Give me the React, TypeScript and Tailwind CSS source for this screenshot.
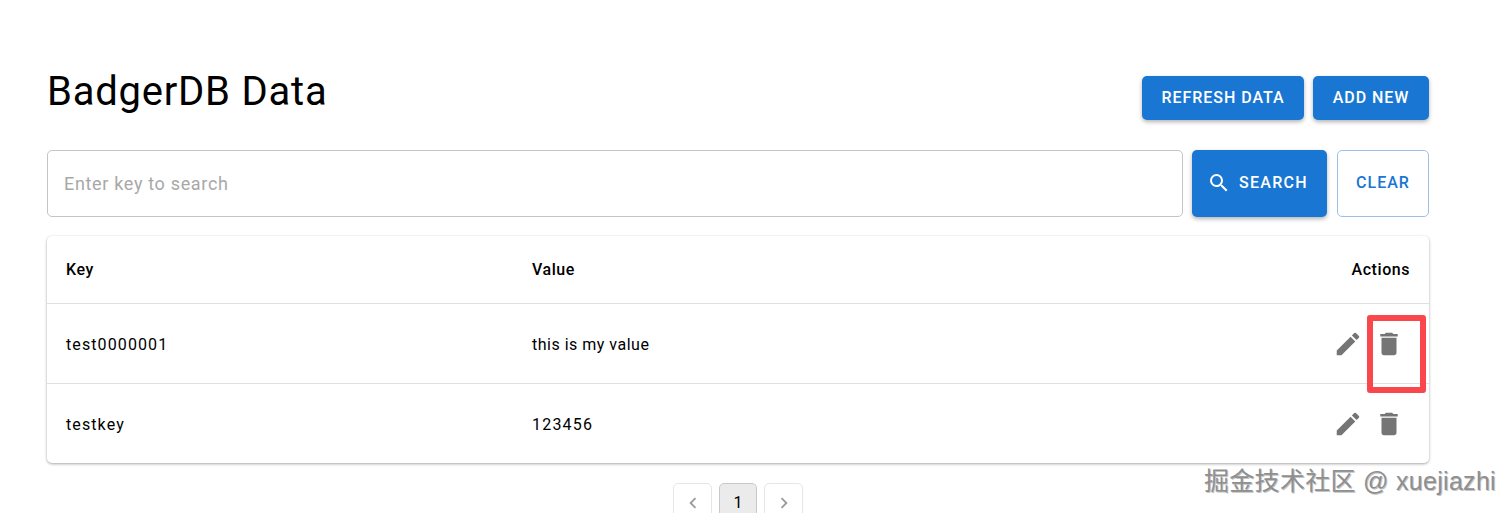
const rows = [
  { key: 'test0000001', value: 'this is my value', valueClass: 'tracking-[0.5px]', height: 'h-[80px] border-b border-[#e0e0e0]' },
  { key: 'testkey', value: '123456', valueClass: 'tracking-[1.2px]', height: 'h-[79px]' },
];

function EditIcon() {
  return (
    <svg viewBox="0 0 24 24" className="w-[30px] h-[30px] fill-[#757575]">
      <path d="M3 17.25V21h3.75L17.81 9.94l-3.75-3.75L3 17.25zM20.71 7.04a.996.996 0 0 0 0-1.41l-2.34-2.34a.996.996 0 0 0-1.41 0l-1.83 1.83 3.75 3.75 1.83-1.83z" />
    </svg>
  );
}

function DeleteIcon() {
  return (
    <svg viewBox="0 0 24 24" className="w-[30px] h-[30px] fill-[#757575]">
      <path d="M6 19c0 1.1.9 2 2 2h8c1.1 0 2-.9 2-2V7H6v12zM19 4h-3.5l-1-1h-5l-1 1H5v2h14V4z" />
    </svg>
  );
}

function SearchIcon() {
  return (
    <svg viewBox="0 0 24 24" className="w-[24px] h-[24px] fill-white">
      <path d="M15.5 14h-.79l-.28-.27A6.471 6.471 0 0 0 16 9.5 6.5 6.5 0 1 0 9.5 16c1.61 0 3.09-.59 4.23-1.57l.27.28v.79l5 4.99L20.49 19l-4.99-5zm-6 0C7.01 14 5 11.99 5 9.5S7.01 5 9.5 5 14 7.01 14 9.5 11.99 14 9.5 14z" />
    </svg>
  );
}

export default function App() {
  return (
    <div className="relative h-[513px] overflow-hidden bg-white font-['Roboto',sans-serif] text-black">
      <div className="pl-[47px] pr-[83px] pt-[76px]">
        <div className="flex items-start justify-between h-[74px]">
          <h1 className="text-[40px] leading-[32px] tracking-[0.77px] font-normal">BadgerDB Data</h1>
          <div className="flex gap-[9px]">
            <button className="h-[44px] w-[162px] rounded-[5px] bg-[#1976d2] text-white text-[16px] font-medium tracking-[0.95px] shadow-[0_2px_4px_rgba(0,0,0,0.3)]">
              REFRESH DATA
            </button>
            <button className="h-[44px] w-[116px] rounded-[5px] bg-[#1976d2] text-white text-[16px] font-medium tracking-[0.95px] shadow-[0_2px_4px_rgba(0,0,0,0.3)]">
              ADD NEW
            </button>
          </div>
        </div>

        <div className="flex gap-[9px] h-[67px]">
          <div className="flex-1 flex items-center border border-[#c4c4c4] rounded-[5px] px-[16px]">
            <span className="text-[18px] text-[#a8a8a8] tracking-[0.67px]">Enter key to search</span>
          </div>
          <button className="w-[135px] mr-px flex items-center justify-center gap-[8px] pb-[2px] pr-[4px] rounded-[5px] bg-[#1976d2] text-white text-[16px] font-medium tracking-[1.3px] shadow-[0_2px_4px_rgba(0,0,0,0.3)]">
            <SearchIcon />
            SEARCH
          </button>
          <button className="w-[92px] pb-[2px] rounded-[5px] border border-[#9dc1e6] text-[#1976d2] text-[16px] font-medium tracking-[1px]">
            CLEAR
          </button>
        </div>

        <div className="mt-[19px] rounded-[5px] shadow-[0_1px_3px_rgba(0,0,0,0.35)]">
          <div className="flex items-center h-[68px] border-b border-[#e0e0e0] px-[19px] text-[16px] font-medium tracking-[0.55px]">
            <div className="w-[466px]">Key</div>
            <div className="flex-1">Value</div>
            <div>Actions</div>
          </div>
          {rows.map((row) => (
            <div key={row.key} className={`flex items-center pl-[19px] pr-[25px] text-[16px] ${row.height}`}>
              <div className="w-[466px] pt-[2px] tracking-[1.1px]">{row.key}</div>
              <div className={`flex-1 pt-[2px] ${row.valueClass}`}>{row.value}</div>
              <div className="flex items-center gap-[11px]">
                <EditIcon />
                <DeleteIcon />
              </div>
            </div>
          ))}
        </div>

        <div className="mt-[20px] flex justify-center gap-[7px]">
          <div className="w-[39px] h-[40px] flex items-center justify-center border border-[#e6e6e6] rounded-[5px]">
            <svg viewBox="0 0 24 24" className="w-[22px] h-[22px] fill-[#9a9a9a]"><path d="M15.41 7.41 14 6l-6 6 6 6 1.41-1.41L10.83 12z" /></svg>
          </div>
          <div className="w-[38px] h-[40px] flex items-center justify-center border border-[#c9c9c9] bg-[#ebebeb] rounded-[5px] text-[16px]">1</div>
          <div className="w-[39px] h-[40px] flex items-center justify-center border border-[#e6e6e6] rounded-[5px]">
            <svg viewBox="0 0 24 24" className="w-[22px] h-[22px] fill-[#9a9a9a]"><path d="M10 6 8.59 7.41 13.17 12l-4.58 4.59L10 18l6-6z" /></svg>
          </div>
        </div>
      </div>

      <div className="absolute left-[1367px] top-[315px] w-[59px] h-[78px] border-[6px] border-[#f9474c] rounded-[3px]" />
      <div className="absolute left-[1204px] top-[465px] text-[25px] leading-[32px] tracking-[0.3px] text-[#8f8f8f] [text-shadow:1px_1px_0_#c4c4c4] font-['Liberation_Sans','Noto_Sans_CJK_SC',sans-serif] whitespace-nowrap">
        掘金技术社区 @ xuejiazhi
      </div>
    </div>
  );
}
